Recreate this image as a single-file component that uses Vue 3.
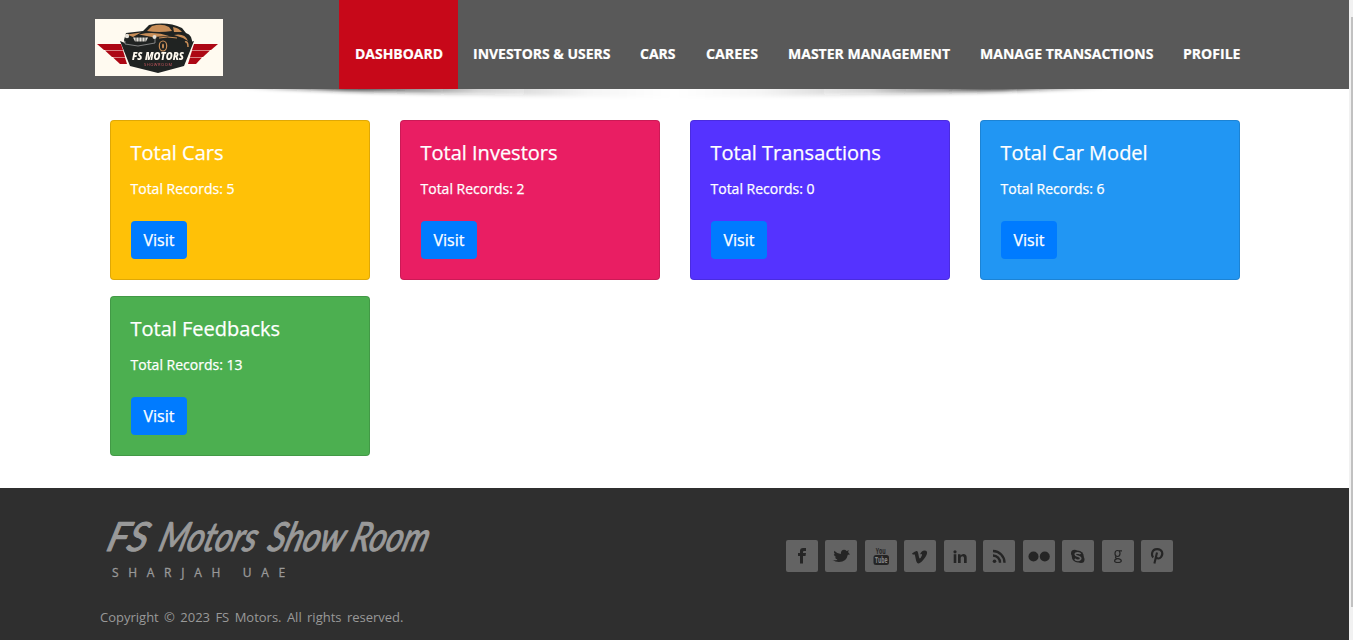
<script setup>
const nav = ['Dashboard', 'Investors & Users', 'Cars', 'Carees', 'Master Management', 'Manage Transactions', 'Profile']
const navWidths = [88, 137.5, 35.5, 52, 162, 173.5, 57.5]
const cards = [
  { title: 'Total Cars', count: 5, tone: 'amber' },
  { title: 'Total Investors', count: 2, tone: 'pink' },
  { title: 'Total Transactions', count: 0, tone: 'violet' },
  { title: 'Total Car Model', count: 6, tone: 'blue' },
  { title: 'Total Feedbacks', count: 13, tone: 'green' },
]
const social = ['facebook', 'twitter', 'youtube', 'vimeo', 'linkedin', 'rss', 'flickr', 'skype', 'google', 'pinterest']
</script>

<template>
  <div class="window">
    <div class="page">
      <header class="header">
        <svg class="logo" viewBox="0 0 128 57" aria-label="FS Motors Showroom">
          <rect width="128" height="57" fill="#fffaf0" />
          <g fill="#ad0714">
            <path d="M2 25H26L28 31H9Z" /><path d="M10 31.600H28L30 38H17Z" /><path d="M18 38.600H30L32 45H25Z" />
            <path d="M123 25H99L97 31H116Z" /><path d="M115 31.600H97L95 38H108Z" /><path d="M107 38.600H95L93 45H101Z" />
          </g>
          <path d="M25 22L30 24H92L99 22L89 47L63 54L35 47Z" fill="#202322" />
          <path d="M31 14L48 12L54 6Q72 2 87 9L91 14Q98 16 97 26L91 30H39Q30 29 29 21Z" fill="#202322" />
          <path d="M52 12L57 7Q67 4 74 8L77 12Q64 14 52 12Z" fill="#c98e58" />
          <path d="M78 8Q84 9 87 13L79 13ZM44 15.500Q60 12 74 17L57 18ZM79 16Q90 14 93 22L88 19ZM32 15.500L46 13.500L38 18Z" fill="#c98e58" />
          <path d="M64 19Q72 17 82 19" fill="none" stroke="#c98e58" />
          <ellipse cx="68" cy="27" rx="3.700" ry="5" fill="#202322" stroke="#c98e58" stroke-width="1.200" />
          <ellipse cx="68" cy="27" rx="1" ry="2.500" fill="#c98e58" />
          <path d="M90 23Q93 22 93 28" fill="none" stroke="#c98e58" stroke-width="1.500" />
          <path d="M38 18.500H53L51 22.500H40Z" fill="#e4e0d8" />
          <path d="M41 18V23M44 18V23M47 18V23M50 18V23" stroke="#202322" stroke-width=".7" />
          <circle cx="32" cy="17" r="2.200" fill="#e4e0d8" /><circle cx="59.500" cy="18" r="2" fill="#e4e0d8" />
          <path d="M30 22V25L43 27L60 24V20" stroke="#aaa" stroke-width=".7" fill="none" />
          <text class="logo-name" x="37" y="41.300" textLength="52" lengthAdjust="spacingAndGlyphs">FS MOTORS</text>
          <text class="logo-sub" x="49" y="47" textLength="28">SHOWROOM</text>
        </svg>
        <nav class="nav">
          <a v-for="(item, i) in nav" :key="item" class="nav-item" :class="{ active: i === 0 }">
            <svg class="nav-label" :width="navWidths[i]" height="20">
              <text x="0" y="15" :textLength="navWidths[i]" lengthAdjust="spacingAndGlyphs">{{ item.toUpperCase() }}</text>
            </svg>
          </a>
        </nav>
        <svg class="header-shadow" viewBox="0 0 1349 20">
          <defs>
            <linearGradient id="edge" gradientUnits="userSpaceOnUse" x1="240" y1="0" x2="674" y2="0">
              <stop offset="0" stop-color="#222" stop-opacity="0" />
              <stop offset=".1" stop-color="#222" stop-opacity=".5" />
              <stop offset=".24" stop-color="#222" stop-opacity=".95" />
              <stop offset=".38" stop-color="#222" stop-opacity=".55" />
              <stop offset=".55" stop-color="#222" stop-opacity=".2" />
              <stop offset=".8" stop-color="#222" stop-opacity=".04" />
              <stop offset="1" stop-color="#222" stop-opacity="0" />
            </linearGradient>
            <filter id="soft" x="-5%" y="-80%" width="110%" height="260%"><feGaussianBlur stdDeviation="3 2" /></filter>
            <g id="wing"><path d="M240 -6H674V9Q480 6 345 1.500Q290 0 240 -2Z" fill="url(#edge)" filter="url(#soft)" /></g>
          </defs>
          <use href="#wing" />
          <use href="#wing" transform="matrix(-1 0 0 1 1349 0)" />
        </svg>
      </header>

      <main class="cards">
        <article v-for="card in cards" :key="card.title" class="card" :class="card.tone">
          <h5>{{ card.title }}</h5>
          <p>Total Records: {{ card.count }}</p>
          <a class="visit">Visit</a>
        </article>
      </main>

      <footer class="footer">
        <div class="brand">
          <svg class="brand-name" width="340" height="50">
            <g transform="translate(0 38) skewX(-16)">
              <text x="5" y="0" textLength="40" lengthAdjust="spacingAndGlyphs">FS</text>
              <text x="57" y="0" textLength="97" lengthAdjust="spacingAndGlyphs">Motors</text>
              <text x="166" y="0" textLength="76" lengthAdjust="spacingAndGlyphs">Show</text>
              <text x="249" y="0" textLength="77" lengthAdjust="spacingAndGlyphs">Room</text>
            </g>
          </svg>
          <div class="place">SHARJAH UAE</div>
          <p class="copyright">Copyright © 2023 FS Motors. All rights reserved.</p>
        </div>
        <div class="social">
          <a v-for="name in social" :key="name" class="social-link" :aria-label="name">
            <svg viewBox="0 0 32 32">
              <path v-if="name === 'facebook'" d="M14 23.500V16H12V13H14V11Q14 8 17 8H20V11H18Q17 11 17 12V13H20L19.500 16H17V23.500Z" />
              <path v-else-if="name === 'twitter'" d="M7.500 20Q11 20.700 12.500 19.400Q10.500 19 10 17.200H11.300Q8.800 16 8.800 14L10 14.300Q8.500 12.800 9.200 10.700Q12 13.500 15.800 14Q16 9.800 19 9.800Q20.700 9.900 21.500 11L24 10.200L23 12L25 14.500L22.800 14.700Q21.500 22 14 22Q10.500 22 7.500 20Z" />
              <g v-else-if="name === 'youtube'">
                <text class="tube-text you" x="10.800" y="14" textLength="10" lengthAdjust="spacingAndGlyphs">You</text>
                <rect x="8.500" y="15" width="15.500" height="10" rx="2.500" />
                <text class="tube-text light" x="10" y="23.300" textLength="12.500" lengthAdjust="spacingAndGlyphs">Tube</text>
              </g>
              <path v-else-if="name === 'vimeo'" d="M8 13.500Q11.500 10.500 13 11C14.600 11.500 14.400 17.500 15.800 18.500Q16.800 18.300 18 15.300Q18.300 13.500 16 14.300Q17.500 10.500 20.500 10.500Q24 10.700 22.800 14.300C21.800 17.500 17 23.500 14.200 23.500C11.500 23.500 11.800 15 10.200 14.300L9 14.800Z" />
              <g v-else-if="name === 'linkedin'">
                <circle cx="11" cy="11.800" r="1.600" /><path d="M9.700 14.300H12.300V23H9.700ZM14 14.300H16.500V15.500Q17.500 14 19.400 14Q22.700 14.100 22.700 17.500V23H20V18Q20 16.200 18.500 16.200Q16.700 16.200 16.700 18V23H14Z" />
              </g>
              <g v-else-if="name === 'rss'">
                <circle cx="11.500" cy="21.200" r="1.800" /><path class="line" d="M10 15.500A7 7 0 0 1 17 22.800M10 11A11.700 11.700 0 0 1 21.500 22.800" />
              </g>
              <g v-else-if="name === 'flickr'"><circle cx="10.500" cy="16.500" r="5" /><circle cx="21.800" cy="16.500" r="5" /></g>
              <g v-else-if="name === 'skype'">
                <circle cx="15.800" cy="16.500" r="6" /><circle cx="12.500" cy="13.300" r="3.500" /><circle cx="19" cy="19.600" r="3.500" />
                <path class="skype-s" d="M18.500 14Q17.800 12.800 15.800 12.800Q13.200 12.900 13.300 14.500C13.400 16.700 18.700 15.700 18.700 18.300Q18.600 20.300 15.900 20.300Q13.500 20.300 13 18.700" />
              </g>
              <g v-else-if="name === 'google'" class="google-g">
                <ellipse cx="15.500" cy="13.500" rx="2.500" ry="3" />
                <path d="M17 10.800H20M14 16.300Q12.800 17.500 14.500 18.200C17 19 19.500 19 19.300 21C19 23 12.700 23 12.600 21Q12.600 19.200 15.300 18.600" />
              </g>
              <path v-else class="pin" d="M12.300 17.300C10.200 15.700 10.300 9.200 16 9.100C21.500 9 22.500 14.200 20 17.200C18.200 19.300 16 18.700 15.200 17.300M16 12.500L13.400 23.500" />
            </svg>
          </a>
        </div>
      </footer>
    </div>
    <div class="scrollbar"><div class="thumb"></div></div>
  </div>
</template>

<style>
html, body { margin: 0; background: #fff; overflow: hidden; }
</style>
<style scoped>
* { box-sizing: border-box; }
.window { display: flex; width: 1353px; height: 640px; font-family: "Open Sans", sans-serif; overflow: hidden; }
.page { width: 1349px; display: flex; flex-direction: column; }
.header { position: relative; height: 89px; background: #595959; display: flex; padding-left: 95px; flex: none; }
.logo { width: 128px; height: 57px; margin-top: 19px; filter: blur(.25px); }
.logo-name { font: italic 800 10px "Open Sans", sans-serif; fill: #fffaf0; }
.logo-sub { font: 4px "Open Sans", sans-serif; fill: #cc5960; }
.nav { display: flex; margin-left: 116px; }
.nav-item { height: 89px; padding: 44px 15.5px 0 15.5px; color: #fff; font-size: 14px; font-weight: 700; }
.nav-item:not(.active) { padding: 44px 14.9px 0 15px; }
.nav-item.active { background: #c70819; }
.nav-label { display: block; fill: #fff; overflow: visible; stroke: #fff; stroke-width: .2px; }
.header-shadow { position: absolute; left: 0; top: 89px; width: 1349px; height: 20px; overflow: hidden; }
.cards { display: grid; grid-template-columns: repeat(4, 260px); grid-auto-rows: 160px; gap: 16px 30px; padding: 31px 110px 32px; flex: none; }
.card { border: 1px solid rgba(0,0,0,.125); border-radius: 4px; padding: 20px 19.5px; color: #fff; -webkit-text-stroke: .25px #fff; }
.amber { background-color: #ffc107; }
.pink { background-color: #e91e63; }
.violet { background-color: #5533ff; }
.blue { background-color: #2196f3; }
.green { background-color: #4caf50; }
h5 { margin: 0 0 12px; font-size: 20px; line-height: 24px; font-weight: 400; }
.card p { margin: 0 0 20px; font-size: 14px; line-height: 24px; }
.visit { display: block; width: 56px; height: 38px; margin-left: .5px; border-radius: 4px; background: #007bff; color: #fff; font-size: 16px; line-height: 38px; text-align: center; }
.footer { height: 152px; background: #2f2f2f; display: flex; color: #999; flex: none; }
.brand { width: 686px; margin-left: 100px; padding-top: 25px; }
.brand-name { display: block; fill: #999; font: italic 400 40px Lato, cursive; stroke: #999; stroke-width: 1.1px; stroke-linejoin: round; overflow: visible; }
.place { margin: 0 0 0 12px; font-size: 12px; line-height: 20px; letter-spacing: 9.7px; -webkit-text-stroke: .3px #999; }
.copyright { margin: 24px 0 0; font-size: 13px; line-height: 20px; word-spacing: 2px; }
.social { display: flex; gap: 7.45px; padding-top: 52px; }
.social-link { width: 32px; height: 32px; background: #636363; border-radius: 2px; }
.social-link svg { display: block; width: 32px; height: 32px; fill: #252525; }
.social-link .line, .social-link .pin { fill: none; stroke: #252525; stroke-width: 2.4; }
.social-link .pin { stroke-width: 2.1; }
.social-link .skype-s { fill: none; stroke: #666; stroke-width: 1.7; }
.tube-text { font: 700 8px "Open Sans", sans-serif; fill: #252525; }
.tube-text.light { fill: #888; }
.google-g { fill: none; stroke: #252525; stroke-width: 1.2; }
.scrollbar { width: 4px; background: #f1f1f1; padding: 17px 0 0 2px; }
.thumb { height: 590px; background: #c1c1c1; }
</style>
